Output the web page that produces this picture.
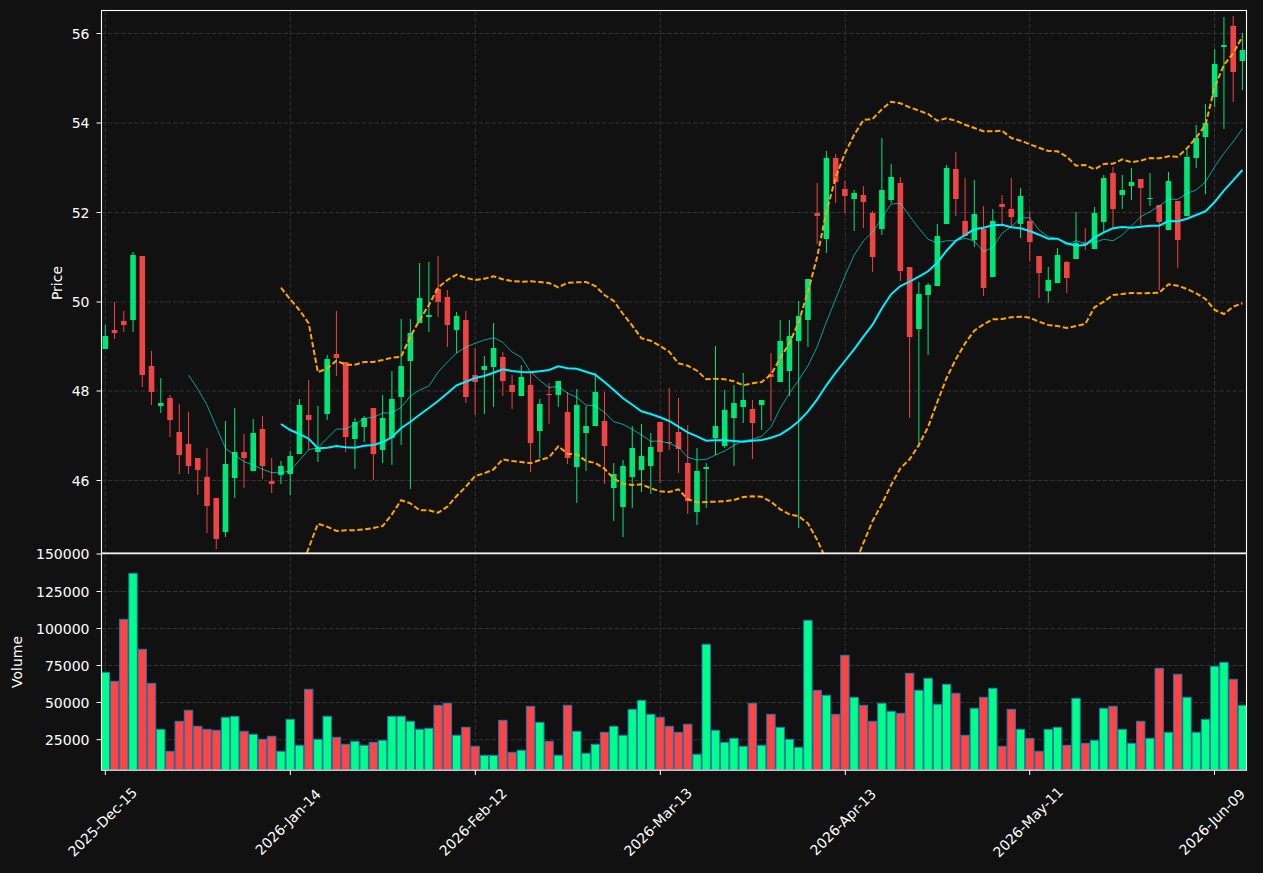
<!DOCTYPE html>
<html lang="en">
<head>
    <meta charset="UTF-8">
    <meta name="viewport" content="width=device-width, initial-scale=1.0">
    <title>Price chart</title>
    <script src="https://cdn.jsdelivr.net/npm/@tailwindcss/browser@4"></script>
</head>
<body class="min-h-screen bg-[#111111] font-['DejaVu_Sans',sans-serif]">
    <svg id="chart" class="block w-[1263px] h-[873px]" viewBox="0 0 1263 873" xmlns="http://www.w3.org/2000/svg">
        <defs>
            <clipPath id="price-clip"><rect x="101.5" y="10.5" width="1145" height="542.5"></rect></clipPath>
            <clipPath id="volume-clip"><rect x="101.5" y="553.5" width="1145" height="216.5"></rect></clipPath>
        </defs>

        <g id="grid" class="stroke-[#333333]" stroke-width="1" stroke-dasharray="4.5 2"></g>
        <g id="volume" clip-path="url(#volume-clip)"></g>
        <g id="candles" clip-path="url(#price-clip)"></g>
        <g id="lines" clip-path="url(#price-clip)" fill="none"></g>

        <g class="stroke-white" stroke-width="1.1" fill="none">
            <rect x="101.5" y="10.5" width="1145" height="542.5"></rect>
            <rect x="101.5" y="553.7" width="1145" height="216.5"></rect>
        </g>
        <g id="ticks" class="stroke-white" stroke-width="1"></g>

        <g class="fill-white text-[14px]" text-anchor="end" dominant-baseline="central">
            <text x="89.5" y="33.5">56</text>
            <text x="89.5" y="123">54</text>
            <text x="89.5" y="212.5">52</text>
            <text x="89.5" y="302">50</text>
            <text x="89.5" y="391">48</text>
            <text x="89.5" y="480.5">46</text>
            <text x="89.5" y="554">150000</text>
            <text x="89.5" y="591.5">125000</text>
            <text x="89.5" y="628.5">100000</text>
            <text x="89.5" y="665.5">75000</text>
            <text x="89.5" y="702.5">50000</text>
            <text x="89.5" y="740">25000</text>
        </g>
        <g class="fill-white text-[14px]" text-anchor="middle" dominant-baseline="central">
            <text transform="translate(57 283) rotate(-90)">Price</text>
            <text transform="translate(17 662) rotate(-90)">Volume</text>
            <text transform="translate(102.5 822) rotate(-45)">2025-Dec-15</text>
            <text transform="translate(288 822) rotate(-45)">2026-Jan-14</text>
            <text transform="translate(473 822) rotate(-45)">2026-Feb-12</text>
            <text transform="translate(658 822) rotate(-45)">2026-Mar-13</text>
            <text transform="translate(843 822) rotate(-45)">2026-Apr-13</text>
            <text transform="translate(1028 822) rotate(-45)">2026-May-11</text>
            <text transform="translate(1212 822) rotate(-45)">2026-Jun-09</text>
        </g>
    </svg>

    <script>
        // one row per session: colour, wick top, body top, body bottom, wick bottom, volume top (all in px)
        const bars = [
            ['g',325,336,349,349,672.3],['r',302,330,333,339,681.3],['r',311,321,325,332,619.3],['g',252,255,320,332,573.3],
            ['r',256,256,375,387,649.3],['r',351,366,392,405,683.3],['g',378,403,406,413,729.3],['r',395,398,420,437,751.3],
            ['r',404,432,455,474,721.3],['r',412,444,466,474,710.3],['r',458,458,470,495,726.3],['r',448,477,506,533,729.3],
            ['r',498,498,539,549,730.3],['g',421,464,532,537,717.3],['g',408,452,478,498,716.3],['r',434,452,458,488,731.3],
            ['g',419,433,471,471,734.3],['r',416,429,466,479,739.3],['r',458,481,484,493,736.3],['g',461,466,475,484,751.3],
            ['g',451,456,474,495,719.3],['g',399,405,454,454,745.3],['r',380,415,420,450,689.3],['g',406,448,452,462,739.3],
            ['g',355,359,414,420,716.3],['r',311,354,358,376,737.3],['r',362,362,437,452,744.3],['g',418,422,439,469,741.3],
            ['g',416,418,427,442,745.3],['r',408,408,454,480,742.3],['g',395,418,450,463,740.3],['g',371,399,438,465,716.3],
            ['g',319,366,397,445,716.3],['g',319,333,361,489,721.3],['g',263,298,323,323,729.3],['g',262,315,317,332,728.3],
            ['r',256,289,302,317,705.3],['r',290,297,325,347,703.3],['g',312,316,330,353,735.3],['r',311,320,397,403,727.3],
            ['r',348,375,382,415,746.3],['g',356,366,370,414,755.3],['g',323,348,367,407,755.3],['r',352,357,381,396,720.3],
            ['r',375,385,392,409,752.3],['g',365,377,396,396,750.3],['r',373,385,443,472,706.3],['g',399,404,431,458,722.3],
            ['r',383,394,395,424,741.3],['g',381,381,395,407,755.3],['r',392,412,458,464,705.3],['g',389,405,467,503,731.3],
            ['g',406,426,433,471,753.3],['g',373,392,426,426,744.3],['r',392,421,446,484,732.3],['g',463,474,488,521,726.3],
            ['g',460,466,507,537,735.3],['g',426,448,477,508,709.3],['g',424,456,470,492,700.3],['g',433,447,466,494,714.3],
            ['r',422,422,452,483,717.3],['r',388,442,443,450,726.3],['r',398,432,449,473,732.3],['r',425,463,501,514,724.3],
            ['g',448,471,512,525,754.3],['g',463,467,469,508,644.3],['g',346,426,438,455,730.3],['g',390,410,446,448,742.3],
            ['g',385,403,418,466,738.3],['g',373,400,407,423,746.3],['r',400,409,423,459,703.3],['g',400,400,405,430,745.3],
            ['r',353,374,377,421,714.3],['g',320,341,382,382,727.3],['g',320,336,371,396,739.3],['g',301,316,341,528,747.3],
            ['g',279,279,320,347,620.3],['r',183,213,216,244,690.3],['g',151,158,239,253,695.3],['r',154,158,182,203,714.3],
            ['r',181,189,196,213,655.3],['g',190,193,199,231,697.3],['r',186,195,202,228,705.3],['r',211,213,257,272,721.3],
            ['g',138,190,229,235,703.3],['g',164,177,200,203,711.3],['r',177,183,271,281,713.3],['r',267,267,337,418,673.3],
            ['g',282,294,329,447,690.3],['g',283,285,295,355,678.3],['g',224,236,286,286,704.3],['g',165,168,224,224,684.3],
            ['r',152,169,199,216,693.3],['r',178,221,236,237,735.3],['g',180,214,240,247,708.3],['r',206,229,288,296,697.3],
            ['g',209,221,277,277,688.3],['r',195,204,207,224,746.3],['r',178,209,217,228,709.3],['g',188,196,224,238,729.3],
            ['r',211,221,242,261,738.3],['r',256,256,273,298,751.3],['g',267,280,291,303,729.3],['g',248,255,283,283,727.3],
            ['r',261,262,278,293,745.3],['g',212,243,259,259,698.3],['r',228,243,245,250,743.3],['g',207,213,249,249,740.3],
            ['g',175,178,222,233,708.3],['r',167,173,209,228,706.3],['g',175,190,195,209,729.3],['g',168,182,186,200,743.3],
            ['r',179,179,188,225,721.3],['g',173,198,199,206,738.3],['r',205,205,222,290,668.3],['g',172,181,230,230,732.3],
            ['r',201,201,240,268,674.3],['g',150,157,216,216,697.3],['g',125,138,158,168,732.3],['g',104,123,137,194,719.3],
            ['g',49,64,97,107,666.3],['g',17,45,47,129,662.3],['r',16,26,72,102,679.3],['g',33,50,61,90,705.3]
        ];

        // thin moving average starts at bar 9, the others at bar 19
        const maFast = [375,389,405,426.7,448.3,455,461.7,465,469.3,472.7,472.7,471,460.3,449.7,447.7,438.3,429,429,424.3,418.3,417.3,413,413,407.3,396,390,386,372,362,353,347,343.3,340,337.7,342.3,352,357.3,372,380.3,387.7,386.3,393.3,397.3,405,406,412.3,421.7,424.3,429.3,435,441.3,441,443.3,447.3,457.3,460,459.3,455,451,445.3,440.7,439.3,436,427.3,408.3,393.3,380,366,346.7,322,299,276,255,241,232,218.3,204,203.3,216,228.3,239.3,243,240.7,240.7,238.3,241,251.7,247.3,233.3,226.7,218,217.7,230,236.7,238.7,245,240.7,243.3,242.3,239.3,240.7,235,226,216.7,211.7,206,199.3,199.3,193.3,190,181.7,166.7,153.3,141.7,128.7];
        const maSlow = [424,430,434,438.7,448.3,447.7,446,447.3,447.7,445.7,445,442.3,437.3,428.3,421.7,414.7,408,401,393.3,385.3,381.7,378,376,372.7,369.3,371,372,372.3,371.3,370,366.3,368.3,368.7,371.7,374.7,382,390,398.3,404.7,411.3,414,417.3,421,426.7,432.3,436.3,440.7,440.3,440.3,441,441.7,440.7,440,437.7,434.7,428.7,421.3,411.7,399.3,385.3,372.7,361,349.3,336.7,324.7,308.3,294.3,286,281.7,276.7,271.3,262.7,250.7,240.7,235,229.3,227.7,225.3,224.7,227.3,228.3,231,234.7,238.7,238.7,243.3,245.7,245,237.7,232.3,228.3,227,227.7,226.7,225.7,225.7,221,221.3,218.7,215,211.3,202,190.7,180.3,170];
        const bandUp = [287.7,299.3,310,323.3,372.3,368.3,360.7,364.7,364.7,362,362,360,357.7,356.7,336.7,320,305,287.7,280,274.7,277.7,280,278.7,276.3,279.3,281,281.7,281.3,282,283,287.3,282.7,282.3,282,286,295,301,314,325.7,338.3,340.7,346,351.7,363.3,365.7,370.7,379.3,378.7,379.3,381.3,385.3,383.3,382,374.7,358.3,343.3,322,292,256.7,211.7,177.3,153.3,135,120,119,109.3,101.7,103.3,107.3,110.7,114,120.7,118.3,120.7,124.7,128,131.3,131.3,130.7,138,140.7,144.3,147.7,151,151.3,156.7,165.7,165,169.3,164,163.7,159.3,162.3,160.7,158,158.3,156.3,156.7,148.3,137.7,125,87,65,53.3,36.7];
        const bandDown = [620,600,575,548,523.7,526.7,531,530.3,530.3,529.3,528,526,514.3,500.3,503.3,510.3,510.3,512.7,506.7,496,486.7,476,473.3,469.3,459.3,461,462,463.3,460,457.3,446.3,453.7,454.3,461,463,468.7,478.7,483.7,485,484.3,488.3,491.3,492,489.3,499.3,502.3,502,501.7,501.3,500,497,496.3,496.7,501.7,509.3,514.3,516.3,523.3,540,560,580,590,566,543,521,504,485,468.3,459.3,445,427,402,378,359.3,343.3,330.7,324.3,319.3,319,317.3,316.7,317.7,321.7,325,326,328,326,324,307.3,301.7,295,294,293,293.3,293,292.7,284.3,285.7,289,293.3,299,310,314,306.7,303.3];

        const xOf = i => 105.3 + 9.245 * i;
        const NS = 'http://www.w3.org/2000/svg';

        function add(parentId, tag, attrs) {
            const el = document.createElementNS(NS, tag);
            for (const key in attrs) el.setAttribute(key, attrs[key]);
            document.getElementById(parentId).appendChild(el);
        }

        function hLine(parent, y, x1, x2) { add(parent, 'line', { x1, x2, y1: y, y2: y }); }
        function vLine(parent, x, y1, y2) { add(parent, 'line', { x1: x, x2: x, y1, y2 }); }

        const priceY = [33.5, 123, 212.5, 302, 391, 480.5];
        const volumeY = [591.5, 628.5, 665.5, 702.5, 739.7];
        const dateX = [105.3, 290.3, 475.3, 660.3, 845.3, 1029.7, 1214.5];

        priceY.concat(volumeY).forEach(y => {
            hLine('grid', y, 101.5, 1246.5);
            hLine('ticks', y, 96.5, 101.5);
        });
        hLine('ticks', 554, 96.5, 101.5);
        dateX.forEach(x => {
            vLine('grid', x, 10.5, 770);
            vLine('ticks', x, 770, 775);
        });

        bars.forEach((b, i) => {
            const x = xOf(i);
            const candle = b[0] === 'g' ? '#00e676' : '#ef4444';
            const vol = b[0] === 'g' ? '#00ff88' : '#ff4444';
            vLine('candles', x, b[1], b[4]);
            document.getElementById('candles').lastChild.setAttribute('stroke', candle);
            add('candles', 'rect', { x: x - 2.8, y: b[2], width: 5.6, height: Math.max(b[3] - b[2], 1), fill: candle });
            add('volume', 'rect', { x: x - 4.2, y: b[5], width: 8.4, height: 770 - b[5], fill: vol, stroke: '#1f77b4', 'stroke-width': 1 });
        });

        function drawLine(values, start, attrs) {
            const points = values.map((y, i) => xOf(start + i).toFixed(1) + ',' + y).join(' ');
            add('lines', 'polyline', Object.assign({ points }, attrs));
        }

        drawLine(maFast, 9, { stroke: '#00ffff', 'stroke-opacity': 0.6, 'stroke-width': 1 });
        drawLine(maSlow, 19, { stroke: '#00f0ff', 'stroke-width': 2 });
        drawLine(bandUp, 19, { stroke: '#ffa500', 'stroke-width': 2, 'stroke-dasharray': '5.5 2.5' });
        drawLine(bandDown, 19, { stroke: '#ffa500', 'stroke-width': 2, 'stroke-dasharray': '5.5 2.5' });
    </script>
</body>
</html>
